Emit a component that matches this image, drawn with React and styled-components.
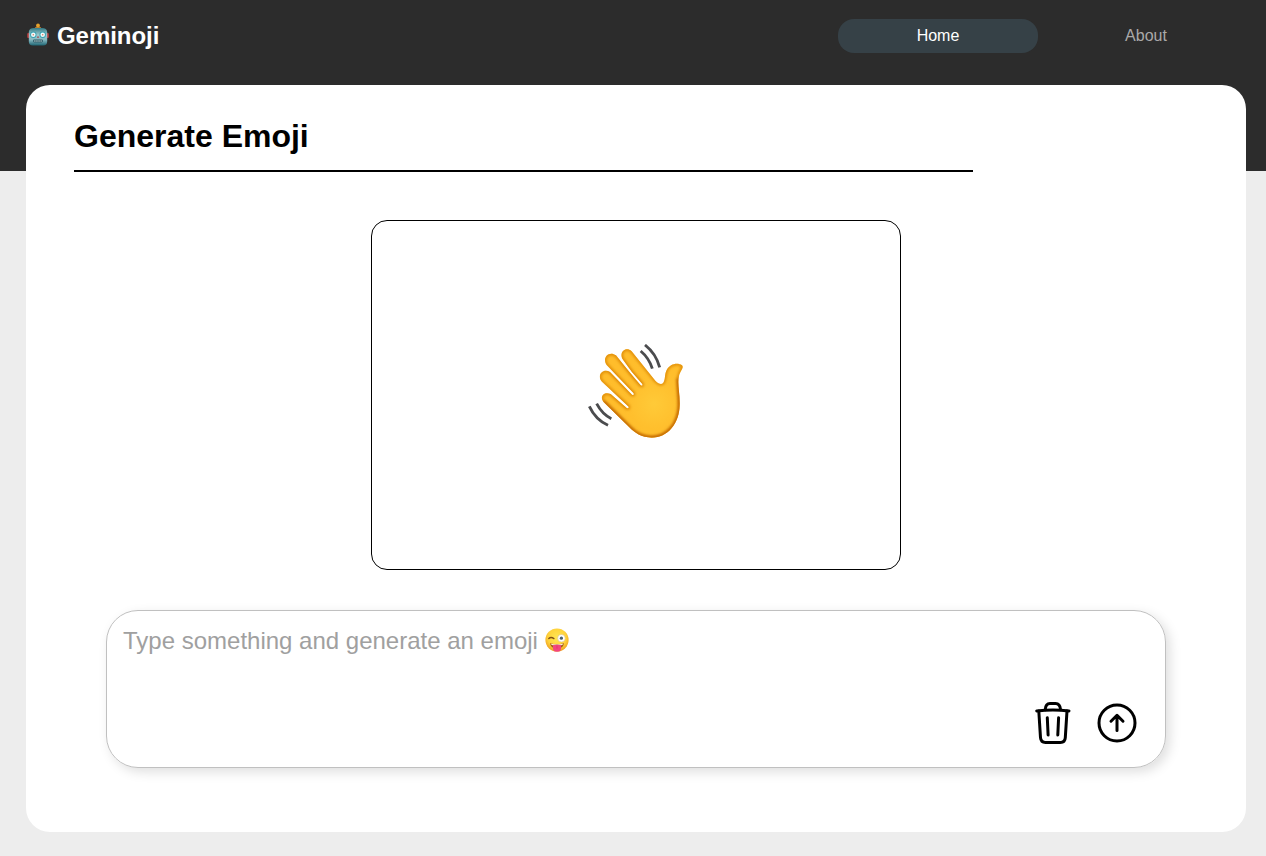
import React from "react";
import styled, { createGlobalStyle } from "styled-components";

const GlobalStyle = createGlobalStyle`
  *, *::before, *::after { box-sizing: border-box; }
  body {
    margin: 0;
    font-family: "Liberation Sans", Arial, Helvetica, sans-serif;
  }
`;

const Page = styled.div`
  height: 856px;
  padding: 0 20px 24px 26px;
  display: flex;
  flex-direction: column;
  background: linear-gradient(#2c2c2c 0 171px, #ededed 171px);
`;

const Header = styled.header`
  height: 85px;
  padding-top: 19px;
  display: flex;
  justify-content: space-between;
  align-items: flex-start;
`;

const Brand = styled.div`
  height: 34px;
  display: flex;
  align-items: center;
  gap: 7px;
  color: #fff;
  font-size: 24px;
  font-weight: 700;
  letter-spacing: -0.05px;
`;

const Nav = styled.nav`
  display: flex;
  gap: 8px;
`;

const NavItem = styled.a`
  width: 200px;
  height: 34px;
  border-radius: 16px;
  text-align: center;
  font-size: 16px;
  line-height: 33px;
  color: ${(p) => (p.$active ? "#fff" : "#a9a9a9")};
  background: ${(p) => (p.$active ? "#364147" : "transparent")};
`;

const Card = styled.main`
  flex: 1;
  padding: 30px 48px 0;
  border-radius: 24px;
  background: #fff;
  display: flex;
  flex-direction: column;
`;

const Title = styled.h1`
  width: 899px;
  height: 57px;
  margin: 0 0 48px;
  border-bottom: 2px solid #000;
  font-size: 32px;
  line-height: 42px;
  font-weight: 700;
  color: #000;
`;

const Preview = styled.section`
  width: 530px;
  height: 350px;
  margin: 0 auto 40px;
  padding-bottom: 6px;
  border: 1px solid #000;
  border-radius: 16px;
  display: flex;
  align-items: center;
  justify-content: center;
`;

const Prompt = styled.section`
  height: 158px;
  margin: 0 32px;
  padding: 15px 28px 23px 16px;
  border: 1px solid #c0c0c0;
  border-radius: 32px;
  box-shadow: 4px 4px 12px rgba(0, 0, 0, 0.13);
  display: flex;
  flex-direction: column;
  justify-content: space-between;
`;

const Placeholder = styled.div`
  height: 30px;
  display: flex;
  align-items: center;
  gap: 7px;
  font-size: 24px;
  color: #a0a0a0;
`;

const Actions = styled.div`
  display: flex;
  justify-content: flex-end;
  align-items: center;
  gap: 26px;
`;

const IconButton = styled.button`
  padding: 0;
  border: 0;
  background: none;
  color: #000;
  display: flex;
`;

const Glyph = styled.svg`
  display: block;
  flex: none;
  margin-bottom: ${(p) => p.$lift || 0}px;
`;

const Robot = () => (
  <Glyph $lift={2} width="24" height="24" viewBox="0 0 24 24" aria-label="robot">
    <defs>
      <linearGradient id="metal" x1="0" y1="0" x2="0" y2="1">
        <stop offset="0" stopColor="#337c87" />
        <stop offset=".4" stopColor="#9fc9cd" />
        <stop offset=".68" stopColor="#86b8c0" />
        <stop offset="1" stopColor="#1f6674" />
      </linearGradient>
    </defs>
    <path d="M8.7 5.5q0-2 3.3-2t3.3 2z" fill="#b87a32" />
    <circle cx="12" cy="2.4" r="1.9" fill="#e4a12c" />
    <rect x="1.2" y="10" width="2.5" height="5" rx="1.1" fill="#b83d3d" />
    <rect x="20.3" y="10" width="2.5" height="5" rx="1.1" fill="#b83d3d" />
    <path d="M2.8 9Q3 5 8 5h8q5 0 5.2 4v9.4q0 4-4.2 4H7q-4.2 0-4.2-4z" fill="url(#metal)" />
    <circle cx="7.3" cy="11.7" r="3.2" fill="#36a0b0" />
    <circle cx="16.7" cy="11.7" r="3.2" fill="#36a0b0" />
    <circle cx="7.3" cy="11.7" r="2.3" fill="#eefafa" />
    <circle cx="16.7" cy="11.7" r="2.3" fill="#eefafa" />
    <circle cx="7.3" cy="11.7" r=".8" fill="#de765d" />
    <circle cx="16.7" cy="11.7" r=".8" fill="#de765d" />
    <path d="m12 12.8 1.2 2h-2.4z" fill="#a54649" />
    <rect x="7" y="16.6" width="10" height="2.8" rx="1.3" fill="#315d68" />
    <path d="M8.2 18h7.7" stroke="#d9e7e7" strokeWidth="1.2" strokeDasharray="1.3 .8" />
  </Glyph>
);

const handShape =
  "M70 200C58 184 73 168 92 177L140 219Q147 222 146 215L66 140C49 121 69 99 90 111L156 179Q163 182 161 175L80 90C65 68 87 46 108 61Q148 112 182 151Q189 155 187 147Q155 113 127 71C117 51 138 33 155 49L226 137Q242 153 250 143C257 132 253 118 260 105C270 86 293 82 306 91C313 98 300 107 297 123C291 145 300 173 299 210C298 266 263 308 215 308C185 308 163 293 148 277Z";

const WavingHand = () => (
  <Glyph width="96" height="96" viewBox="24 27 288 288" aria-label="waving hand">
    <defs>
      <radialGradient id="skin" gradientUnits="userSpaceOnUse" cx="222" cy="207" r="150">
        <stop offset="0" stopColor="#ffca38" />
        <stop offset=".5" stopColor="#ffbf2d" />
        <stop offset="1" stopColor="#ffbd2b" />
      </radialGradient>
      <clipPath id="handClip">
        <path d={handShape} />
      </clipPath>
      <filter id="soften" x="-10%" y="-10%" width="120%" height="120%">
        <feGaussianBlur stdDeviation="4.5" />
      </filter>
    </defs>
    <path d={handShape} fill="url(#skin)" />
    <g clipPath="url(#handClip)">
      <path d={handShape} fill="none" stroke="#d98200" strokeWidth="8" filter="url(#soften)" />
      <path
        d="M70 200L148 277Q177 308 215 308C263 308 298 266 299 210Q297 158 294 130"
        fill="none"
        stroke="#bd6200"
        strokeWidth="9"
        filter="url(#soften)"
      />
    </g>
    <g fill="none" stroke="#4b4c4e" strokeWidth="8.5">
      <path d="M195 30Q228 56 239 97" />
      <path d="M182 48Q207 69 217 101" />
      <path d="M28 214Q46 253 84 271" />
      <path d="M50 206Q66 237 94 251" />
    </g>
  </Glyph>
);

const WinkingFace = () => (
  <Glyph $lift={2} width="24" height="24" viewBox="0 0 24 24" aria-label="winking face with tongue">
    <defs>
      <radialGradient id="face" cx=".5" cy=".4" r=".6">
        <stop offset="0" stopColor="#ffe653" />
        <stop offset=".65" stopColor="#ffd33c" />
        <stop offset="1" stopColor="#ee9e21" />
      </radialGradient>
    </defs>
    <circle cx="12" cy="12" r="11.6" fill="url(#face)" />
    <path d="M5 15.2Q12 17.4 19 15.2Q18 20.6 12 20.6T5 15.2Z" fill="#a0561c" />
    <path d="M6 15.8Q12 17.4 18 15.8l-.6 1.2Q12 18.4 6.6 17z" fill="#fff3dc" />
    <path d="M8 17.3q4-1.2 8 0v2.9q0 3.6-4 3.6t-4-3.6z" fill="#f3457e" />
    <path d="M12 17.6v3" stroke="#d82f6c" strokeWidth=".7" />
    <path d="M3.8 10.6Q6 8.4 8.9 10.6" fill="none" stroke="#805018" strokeWidth="1.4" strokeLinecap="round" />
    <circle cx="16.4" cy="10.2" r="3.8" fill="#fff" stroke="#d5b680" strokeWidth=".5" />
    <circle cx="16.4" cy="10.2" r="1.6" fill="#4b6070" />
  </Glyph>
);

const TrashIcon = () => (
  <Glyph width="36" height="42" viewBox="0 0 36 42" fill="none" stroke="currentColor" strokeWidth="3" strokeLinecap="round" strokeLinejoin="round">
    <path d="M1.7 8.9Q18 7.1 34 8.9" />
    <path d="M10.2 7.8Q10.6 1.6 15 1.6h5.6Q25 1.6 25.6 7.8" />
    <path d="m3.8 9 1.7 26.6Q5.9 40.4 10.5 40.4h14.9Q30 40.4 30.3 35.6L32 9" />
    <path d="m12.3 15.8.8 17.2M23.6 15.8 22.8 33" />
  </Glyph>
);

const SendIcon = () => (
  <Glyph width="40" height="40" viewBox="0 0 40 40" fill="none" stroke="currentColor" strokeWidth="3" strokeLinecap="round" strokeLinejoin="round">
    <circle cx="20" cy="20" r="18" />
    <path d="M20 27.4V12.3M14 18.2 20 12.3l6 5.9" />
  </Glyph>
);

export default function App() {
  return (
    <>
      <GlobalStyle />
      <Page>
        <Header>
          <Brand>
            <Robot />
            <span>Geminoji</span>
          </Brand>
          <Nav>
            <NavItem $active>Home</NavItem>
            <NavItem>About</NavItem>
          </Nav>
        </Header>
        <Card>
          <Title>Generate Emoji</Title>
          <Preview>
            <WavingHand />
          </Preview>
          <Prompt>
            <Placeholder>
              <span>Type something and generate an emoji</span>
              <WinkingFace />
            </Placeholder>
            <Actions>
              <IconButton aria-label="Clear">
                <TrashIcon />
              </IconButton>
              <IconButton aria-label="Generate">
                <SendIcon />
              </IconButton>
            </Actions>
          </Prompt>
        </Card>
      </Page>
    </>
  );
}
